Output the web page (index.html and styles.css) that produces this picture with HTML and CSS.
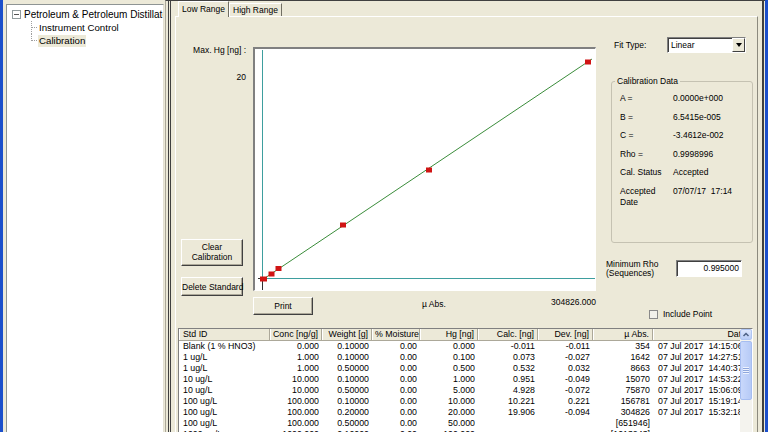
FILE: index.html
```html
<!DOCTYPE html>
<html lang="en">
<head>
    <meta charset="UTF-8">
    <title>Calibration</title>
    <link rel="stylesheet" href="styles.css">
</head>
<body>
    <div class="window">
        <div class="tree-pane">
            <div class="tree">
                <div class="tree-root">
                    <span class="expander"></span>
                    <span class="root-label">Petroleum &amp; Petroleum Distillates</span>
                </div>
                <div class="tree-children">
                    <div class="tree-item"><span class="elbow"></span><span class="tree-label">Instrument Control</span></div>
                    <div class="tree-item"><span class="elbow"></span><span class="tree-label selected">Calibration</span></div>
                </div>
            </div>
        </div>

        <div class="main-pane">
            <div class="main-inner">
                <div class="tabs">
                    <div class="tab active">Low Range</div>
                    <div class="tab">High Range</div>
                </div>

                <div class="tab-page">
                    <div class="upper">
                        <div class="axis-col">
                            <div class="max-label">Max. Hg [ng] :</div>
                            <div class="max-value">20</div>
                            <button class="btn btn-clear">Clear<br>Calibration</button>
                            <button class="btn btn-delete">Delete Standard</button>
                        </div>

                        <div class="plot-col">
                            <div class="plot">
                                <svg class="plot-svg" width="340" height="241" viewBox="0 0 340 241">
                                    <line x1="7.5" y1="1" x2="7.5" y2="230" stroke="#3E9E9E"/>
                                    <line x1="7.5" y1="230" x2="7.5" y2="241" stroke="#303030"/>
                                    <line x1="3" y1="229.5" x2="7" y2="229.5" stroke="#303030"/>
                                    <line x1="7" y1="229.5" x2="340" y2="229.5" stroke="#3E9E9E"/>
                                    <line x1="8.5" y1="230" x2="337" y2="10" stroke="#3A8C3A"/>
                                    <g fill="#D01414">
                                        <rect x="5" y="227.5" width="7" height="5"/>
                                        <rect x="13.5" y="222.5" width="6" height="5"/>
                                        <rect x="20.5" y="217" width="6" height="5"/>
                                        <rect x="85" y="173.5" width="6" height="5"/>
                                        <rect x="171" y="118.5" width="6" height="5"/>
                                        <rect x="330" y="10.5" width="6" height="5"/>
                                    </g>
                                </svg>
                            </div>
                            <div class="plot-footer">
                                <button class="btn btn-print">Print</button>
                                <span class="x-label">µ Abs.</span>
                                <span class="x-max">304826.000</span>
                            </div>
                        </div>

                        <div class="side-col">
                            <div class="fit-row">
                                <span class="fit-label">Fit Type:</span>
                                <div class="select">
                                    <span>Linear</span>
                                    <span class="select-arrow"></span>
                                </div>
                            </div>

                            <fieldset class="cal-data">
                                <legend>Calibration Data</legend>
                                <div class="cal-grid">
                                    <span>A =</span><span>0.0000e+000</span>
                                    <span>B =</span><span>6.5415e-005</span>
                                    <span>C =</span><span>-3.4612e-002</span>
                                    <span>Rho =</span><span>0.9998996</span>
                                    <span>Cal. Status</span><span>Accepted</span>
                                    <span>Accepted<br>Date</span><span>07/07/17&nbsp;&nbsp;17:14</span>
                                </div>
                            </fieldset>

                            <div class="rho-row">
                                <span class="rho-label">Minimum Rho<br>(Sequences)</span>
                                <div class="text-input">0.995000</div>
                            </div>

                            <div class="include-row">
                                <span class="checkbox"></span>
                                <span>Include Point</span>
                            </div>
                        </div>
                    </div>

                    <div class="grid-wrap">
                        <div class="grid-clip">
                            <table class="std-table">
                                <colgroup>
                                    <col style="width: 91px">
                                    <col style="width: 52px">
                                    <col style="width: 50px">
                                    <col style="width: 48px">
                                    <col style="width: 58px">
                                    <col style="width: 60px">
                                    <col style="width: 55px">
                                    <col style="width: 60px">
                                    <col style="width: 97px">
                                </colgroup>
                                <thead>
                                    <tr>
                                        <th>Std ID</th><th>Conc [ng/g]</th><th>Weight [g]</th><th>% Moisture</th><th>Hg [ng]</th>
                                        <th>Calc. [ng]</th><th>Dev. [ng]</th><th>µ Abs.</th><th>Date</th>
                                    </tr>
                                </thead>
                                <tbody>
                                    <tr><td>Blank (1 % HNO3)</td><td>0.000</td><td>0.10000</td><td>0.00</td><td>0.000</td><td>-0.011</td><td>-0.011</td><td>354</td><td>07 Jul 2017&nbsp;&nbsp;14:15:06</td></tr>
                                    <tr><td>1 ug/L</td><td>1.000</td><td>0.10000</td><td>0.00</td><td>0.100</td><td>0.073</td><td>-0.027</td><td>1642</td><td>07 Jul 2017&nbsp;&nbsp;14:27:51</td></tr>
                                    <tr><td>1 ug/L</td><td>1.000</td><td>0.50000</td><td>0.00</td><td>0.500</td><td>0.532</td><td>0.032</td><td>8663</td><td>07 Jul 2017&nbsp;&nbsp;14:40:37</td></tr>
                                    <tr><td>10 ug/L</td><td>10.000</td><td>0.10000</td><td>0.00</td><td>1.000</td><td>0.951</td><td>-0.049</td><td>15070</td><td>07 Jul 2017&nbsp;&nbsp;14:53:22</td></tr>
                                    <tr><td>10 ug/L</td><td>10.000</td><td>0.50000</td><td>0.00</td><td>5.000</td><td>4.928</td><td>-0.072</td><td>75870</td><td>07 Jul 2017&nbsp;&nbsp;15:06:09</td></tr>
                                    <tr><td>100 ug/L</td><td>100.000</td><td>0.10000</td><td>0.00</td><td>10.000</td><td>10.221</td><td>0.221</td><td>156781</td><td>07 Jul 2017&nbsp;&nbsp;15:19:14</td></tr>
                                    <tr><td>100 ug/L</td><td>100.000</td><td>0.20000</td><td>0.00</td><td>20.000</td><td>19.906</td><td>-0.094</td><td>304826</td><td>07 Jul 2017&nbsp;&nbsp;15:32:18</td></tr>
                                    <tr><td>100 ug/L</td><td>100.000</td><td>0.50000</td><td>0.00</td><td>50.000</td><td></td><td></td><td>[651946]</td><td></td></tr>
                                    <tr><td>1000 ug/L</td><td>1000.000</td><td>0.10000</td><td>0.00</td><td>100.000</td><td></td><td></td><td>[1013243]</td><td></td></tr>
                                </tbody>
                            </table>
                        </div>
                        <div class="vscroll">
                            <div class="sb-btn">
                                <svg width="10" height="9" viewBox="0 0 10 9"><polyline points="2.5,6 5,3.5 7.5,6" fill="none" stroke="#4D6185" stroke-width="1.5"/></svg>
                            </div>
                            <div class="sb-thumb"><span class="grip"></span></div>
                        </div>
                    </div>
                </div>
            </div>
        </div>
    </div>
</body>
</html>
```

FILE: styles.css
```css
* {
    box-sizing: border-box;
}

body {
    margin: 0;
    background-color: #ECE9D8;
    font-family: "Liberation Sans", Arial, sans-serif;
    font-size: 8.5px;
    color: #000;
}

.window {
    display: flex;
    width: 768px;
    height: 432px;
    overflow: hidden;
    border-left: 3px solid #1B4FCB;
    border-right: 3px solid #1B4FCB;
}

/* left tree */
.tree-pane {
    width: 162px;
    flex: none;
    padding: 4px 1px 0 3px;
}

.tree {
    height: 100%;
    background-color: #fff;
    border: 1px solid #8E9494;
    border-right-color: #E3E0D2;
    border-bottom: none;
    overflow: hidden;
    white-space: nowrap;
    font-size: 10px;
    padding-top: 3px;
}

.tree-root {
    display: flex;
    align-items: center;
    height: 13px;
    padding-left: 5px;
}

.expander {
    width: 9px;
    height: 9px;
    flex: none;
    border: 1px solid #919B9C;
    background: linear-gradient(#555, #555) no-repeat center / 5px 1px, #fff;
}

.root-label {
    margin-left: 3px;
}

.tree-children {
    padding-left: 24px;
}

.tree-item {
    display: flex;
    align-items: center;
    height: 13px;
}

.elbow {
    width: 6px;
    height: 13px;
    flex: none;
    align-self: flex-start;
    border-left: 1px dotted #A0A0A0;
    background: repeating-linear-gradient(90deg, #A0A0A0 0 1px, transparent 1px 2px) no-repeat 0 6px / 6px 1px;
}

.tree-item:last-child .elbow {
    height: 7px;
}

.tree-label {
    margin-left: 1px;
    padding: 0 1px;
    line-height: 12px;
    font-size: 9.7px;
}

.tree-label.selected {
    background-color: #ECE9D8;
}

/* right pane */
.main-pane {
    width: 600px;
    flex: none;
    border-left: 1px solid #ACA899;
    border-top: 1px solid #404040;
    padding: 0 1px 0 2px;
}

.main-inner {
    height: 100%;
    display: flex;
    flex-direction: column;
    border-left: 3px double #404040;
    border-right: 2px solid #404040;
    padding: 0 4px;
}

.tabs {
    display: flex;
    align-items: flex-end;
    height: 16px;
    padding-left: 3px;
}

.tab {
    height: 14px;
    padding: 0 3px;
    line-height: 12px;
    border: 1px solid;
    border-color: #fff #716F64 transparent #fff;
    border-bottom: none;
    white-space: nowrap;
}

.tab.active {
    position: relative;
    z-index: 1;
    height: 16px;
    padding-top: 1px;
    background-color: #ECE9D8;
}

.tab-page {
    flex: 1;
    margin-top: -1px;
    border: 1px solid;
    border-color: #fff #8C8A7E transparent #fff;
}

.upper {
    display: flex;
    height: 311px;
}

.axis-col {
    width: 77px;
    flex: none;
    display: flex;
    flex-direction: column;
    align-items: flex-start;
    padding: 28px 7px 0 5px;
}

.max-label,
.max-value {
    align-self: stretch;
    text-align: right;
    line-height: 11px;
    white-space: nowrap;
}

.max-value {
    margin-top: 16px;
}

.btn {
    font: inherit;
    color: #000;
    padding: 0;
    background-color: #ECE9D8;
    border: 1px solid;
    border-color: #fff #404040 #404040 #fff;
    box-shadow: inset -1px -1px #ACA899;
    white-space: nowrap;
}

.btn-clear {
    width: 62px;
    height: 27px;
    margin-top: 156px;
    line-height: 9.5px;
}

.btn-delete {
    width: 62px;
    height: 19px;
    margin-top: 11px;
}

.plot-col {
    width: 343px;
    flex: none;
    padding-top: 30px;
}

.plot {
    height: 244px;
    background-color: #fff;
    border-style: solid;
    border-width: 2px 1px 1px 2px;
    border-color: #808080 #fff #fff #808080;
}

.plot-svg {
    display: block;
}

.plot-footer {
    display: flex;
    align-items: flex-start;
    margin-top: 6px;
    line-height: 11px;
}

.btn-print {
    width: 60px;
    height: 18px;
}

.x-label {
    margin-left: 109px;
    margin-top: 2px;
}

.x-max {
    margin-left: auto;
}

.side-col {
    flex: 1;
    padding-left: 10px;
}

.fit-row {
    display: flex;
    align-items: center;
    margin: 20px 0 0 8px;
}

.fit-label {
    width: 53px;
}

.select {
    width: 79px;
    height: 16px;
    display: flex;
    align-items: center;
    padding-left: 3px;
    background-color: #fff;
    border: 1px solid;
    border-color: #808080 #fff #fff #808080;
    box-shadow: inset 1px 1px #404040;
}

.select-arrow {
    margin-left: auto;
    width: 13px;
    height: 14px;
    display: flex;
    align-items: center;
    justify-content: center;
    background-color: #ECE9D8;
    border: 1px solid;
    border-color: #fff #404040 #404040 #fff;
}

.select-arrow::after {
    content: "";
    border-left: 3.5px solid transparent;
    border-right: 3.5px solid transparent;
    border-top: 4px solid #000;
}

.cal-data {
    width: 142px;
    margin: 23px 0 0 5px;
    padding: 6px 0 34px 8px;
    border: 1px solid #C5C2B2;
    border-radius: 3px;
    min-width: 0;
}

.cal-data legend {
    margin-left: -5px;
    padding: 0 2px;
    line-height: 11px;
}

.cal-grid {
    display: grid;
    grid-template-columns: 53px 1fr;
    row-gap: 7.5px;
    line-height: 11px;
    white-space: nowrap;
}

.rho-row {
    display: flex;
    align-items: flex-start;
    margin-top: 17px;
}

.rho-label {
    width: 70px;
    line-height: 9px;
}

.text-input {
    width: 66px;
    height: 17px;
    padding-right: 2px;
    text-align: right;
    line-height: 15px;
    background-color: #fff;
    border: 1px solid;
    border-color: #808080 #fff #fff #808080;
    box-shadow: inset 1px 1px #404040;
}

.include-row {
    display: flex;
    align-items: center;
    margin: 31px 0 0 43px;
    line-height: 11px;
}

.checkbox {
    width: 9px;
    height: 9px;
    margin-right: 5px;
    border: 1px solid #8A8A8A;
    background-color: #F2F1EA;
}

/* standards grid */
.grid-wrap {
    display: flex;
    width: 575px;
    height: 110px;
    margin-left: 2px;
    border: 1px solid;
    border-color: #808080 #fff #fff #808080;
}

.grid-clip {
    width: 561px;
    overflow: hidden;
    background-color: #fff;
}

.std-table {
    width: 571px;
    table-layout: fixed;
    border-collapse: separate;
    border-spacing: 0;
    font-size: 8.8px;
}

.std-table th,
.std-table td {
    padding: 0 3px 0 4px;
    line-height: 11px;
    text-align: right;
    white-space: nowrap;
    overflow: hidden;
    font-weight: normal;
}

.std-table th {
    padding: 0 3px;
    background-color: #ECE9D8;
    border-right: 1px solid #ACA899;
    border-bottom: 1px solid #ACA899;
    box-shadow: inset 1px 0 #fff;
}

.std-table th:first-child,
.std-table td:first-child {
    text-align: left;
    padding-left: 4px;
}

.std-table td:last-child {
    text-align: left;
    padding-left: 5px;
}

.vscroll {
    width: 12px;
    flex: none;
    display: flex;
    flex-direction: column;
    background-color: #F4F3EE;
}

.sb-btn {
    height: 11px;
    display: flex;
    align-items: center;
    justify-content: center;
    background: linear-gradient(#DCE6FD, #B9CDF7);
    border: 1px solid #AFC5F2;
    border-radius: 2px;
}

.sb-thumb {
    height: 59px;
    margin-top: 1px;
    display: flex;
    align-items: center;
    justify-content: center;
    background: linear-gradient(90deg, #C9D8FB, #B6CAF6);
    border: 1px solid #A6BDF0;
    border-radius: 2px;
}

.grip {
    width: 6px;
    height: 7px;
    background: repeating-linear-gradient(#EEF3FE 0 1px, #8EA6DC 1px 2px);
}
```
